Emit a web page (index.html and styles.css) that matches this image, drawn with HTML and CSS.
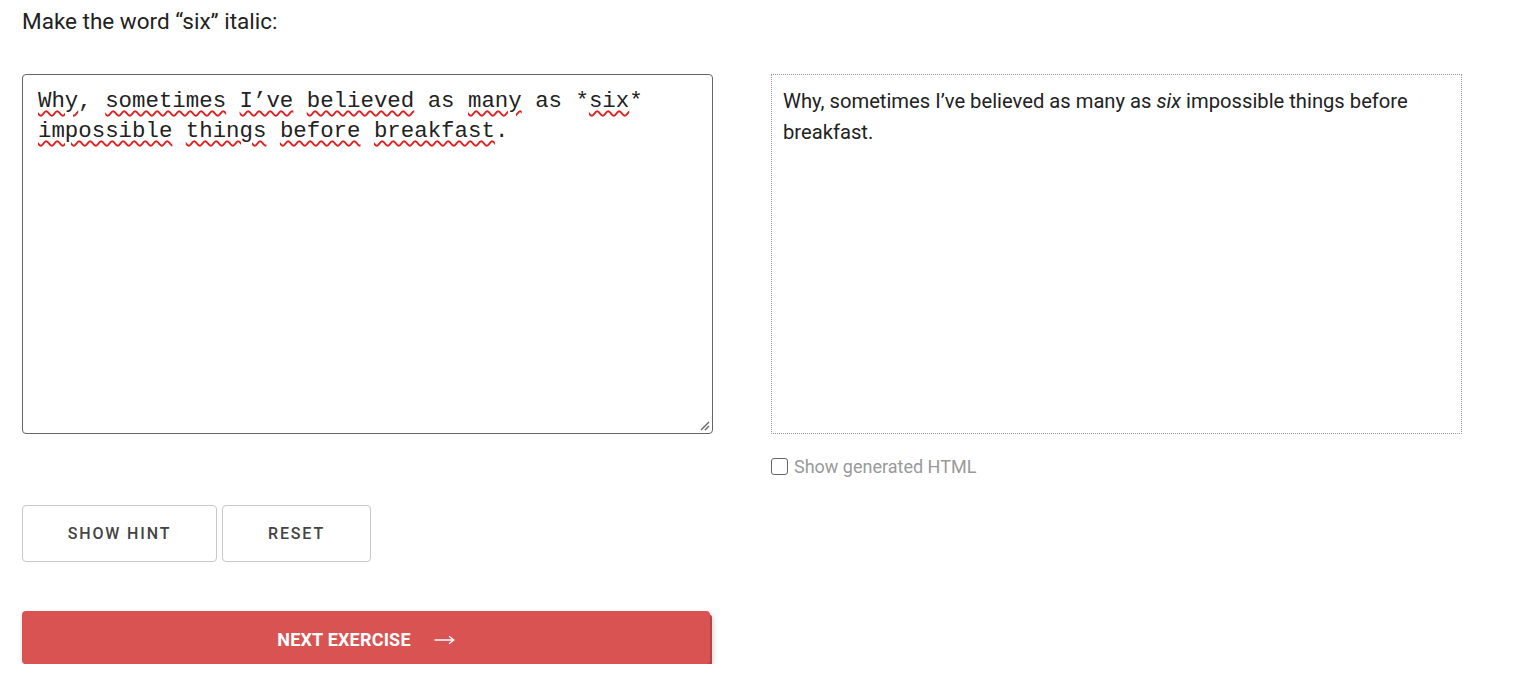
FILE: index.html
```html
<!DOCTYPE html>
<html>
<head>
<meta charset="utf-8">
<link rel="stylesheet" href="styles.css">
</head>
<body>
<div class="page">
  <p class="prompt">Make the word “six” italic:</p>
  <div class="grid">
    <div class="col">
      <div class="editor"><span class="sp">Why</span>, <span class="sp">sometimes</span> <span class="sp">I’ve</span> <span class="sp">believed</span> as <span class="sp">many</span> as *<span class="sp">six</span>*
<span class="sp">impossible</span> <span class="sp">things</span> <span class="sp">before</span> <span class="sp">breakfast</span>.<svg class="grip" width="12" height="12" viewBox="0 0 12 12"><path d="M11 3 L3 11 M11 7 L7 11" stroke="#666" stroke-width="1.4" fill="none"/></svg></div>
      <div class="btnrow">
        <button class="btn hint">SHOW HINT</button>
        <button class="btn reset">RESET</button>
      </div>
      <button class="next">NEXT EXERCISE<svg class="arrow" width="21" height="10" viewBox="0 0 21 10"><path d="M0.5 5 H19.5 M15 1.2 L19.8 5 L15 8.8" stroke="#fff" stroke-width="1.3" fill="none"/></svg></button>
    </div>
    <div class="col">
      <div class="preview">Why, sometimes I’ve believed as many as <em>six</em> impossible things before breakfast.</div>
      <label class="toggle"><span class="box"></span>Show generated HTML</label>
    </div>
  </div>
</div>
</body>
</html>
```

FILE: styles.css
```css
html, body { margin: 0; padding: 0; background: #fff; }
body { font-family: Roboto, "Noto Sans", sans-serif; color: #222; }
.page { padding: 0 22px; }
.prompt { margin: 0; padding-top: 8px; font-size: 22.5px; line-height: 26px; color: #222; }
.grid { display: grid; grid-template-columns: 691px 691px; column-gap: 58px; margin-top: 40px; }
.col { display: flex; flex-direction: column; }
.editor {
  position: relative; box-sizing: border-box; height: 360px;
  border: 1px solid #666; border-radius: 4px;
  padding: 11px 15px; white-space: pre-wrap;
  font-family: "Liberation Mono", "DejaVu Sans Mono", monospace;
  font-size: 22.4px; line-height: 30px; color: #222;
}
.sp { text-decoration: underline wavy #e02020; text-decoration-thickness: 1.5px; text-underline-offset: 3px; }
.grip { position: absolute; right: 2px; bottom: 2px; }
.btnrow { display: flex; gap: 5px; margin-top: 71px; }
.btn {
  box-sizing: border-box; height: 57px; background: #fff;
  border: 1px solid #c8c8c8; border-radius: 4px;
  font-family: Roboto, sans-serif; font-weight: 500; font-size: 16px; letter-spacing: 1.85px; color: #444;
}
.hint { width: 195px; }
.reset { width: 149px; }
.next {
  box-sizing: border-box; margin-top: 49px; height: 53px; width: 688px; border: 0; border-radius: 4px;
  padding-top: 5px;
  background: #d95353; color: #fff;
  box-shadow: 2px 3px 0 #b04646, 2px 4px 6px rgba(0,0,0,0.25);
  font-family: Roboto, sans-serif; font-weight: 700; font-size: 18px; letter-spacing: 0.2px;
  display: flex; align-items: center; justify-content: center; gap: 23px;
}
.arrow { display: block; margin-top: 1px; }
.preview {
  box-sizing: border-box; height: 360px; border: 1px dotted #999;
  padding: 11px 11px; font-size: 20.2px; line-height: 31px; color: #222;
}
.preview em { font-style: italic; }
.toggle { display: flex; align-items: center; gap: 6px; margin-top: 22px; font-size: 18px; color: #999; }
.box { width: 15px; height: 15px; border: 1.5px solid #666; border-radius: 3px; }
```
